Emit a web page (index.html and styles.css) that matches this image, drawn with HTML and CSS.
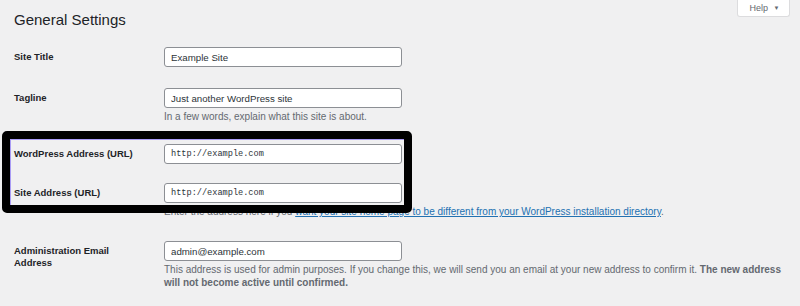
FILE: index.html
```html
<!DOCTYPE html>
<html lang="en">
<head>
  <meta charset="UTF-8" />
  <title>General Settings</title>
  <link rel="stylesheet" href="styles.css">
</head>
<body>
  <div class="wrap">
    <div class="page-head">
      <h1>General Settings</h1>
      <button class="help-tab">Help <span class="caret">&#9660;</span></button>
    </div>

    <div class="form-table">
      <div class="row">
        <label class="row-label">Site Title</label>
        <div class="row-field">
          <input class="regular-text" type="text" value="Example Site">
        </div>
      </div>

      <div class="row">
        <label class="row-label">Tagline</label>
        <div class="row-field">
          <input class="regular-text" type="text" value="Just another WordPress site">
          <p class="description">In a few words, explain what this site is about.</p>
        </div>
      </div>

      <div class="row">
        <label class="row-label">WordPress Address (URL)</label>
        <div class="row-field">
          <input class="regular-text code" type="text" value="http://example.com">
        </div>
      </div>

      <div class="row row-tight">
        <label class="row-label">Site Address (URL)</label>
        <div class="row-field">
          <input class="regular-text code" type="text" value="http://example.com">
          <p class="description">Enter the address here if you <a href="#">want your site home page to be different from your WordPress installation directory</a>.</p>
        </div>
      </div>

      <div class="row">
        <label class="row-label label-wrap">Administration Email<br>Address</label>
        <div class="row-field">
          <input class="regular-text" type="text" value="admin@example.com">
          <p class="description">This address is used for admin purposes. If you change this, we will send you an email at your new address to confirm it. <strong>The new address will not become active until confirmed.</strong></p>
        </div>
      </div>
    </div>

    <!-- highlight drawn over the two URL rows -->
    <div class="highlight"></div>
  </div>
</body>
</html>
```

FILE: styles.css
```css
:root {
  --bg-color: #f0f0f1;
  --text-color: #1d2327;
  --muted-color: #646970;
  --link-color: #2271b1;
  --border-color: #8c8f94;
}

* {
  margin: 0;
  padding: 0;
  box-sizing: border-box;
}

body {
  background-color: var(--bg-color);
  color: var(--text-color);
  font-family: 'Liberation Sans', Arial, sans-serif;
  overflow: hidden;
}

.wrap {
  position: relative;
  width: 800px;
  height: 306px;
  padding: 0 10px 0 14px;
}

.page-head {
  display: flex;
  justify-content: space-between;
  align-items: flex-start;
  height: 36px;
}

.page-head h1 {
  font-size: 15px;
  font-weight: 400;
  line-height: 20px;
  padding-top: 10px;
  color: var(--text-color);
}

.help-tab {
  width: 53px;
  height: 18px;
  margin-top: -1px;
  background: #fff;
  border: 1px solid #dcdcde;
  border-top: none;
  border-radius: 0 0 3px 3px;
  color: var(--muted-color);
  font-family: inherit;
  font-size: 9px;
  padding-left: 2px;
}

.help-tab .caret {
  font-size: 6px;
  margin-left: 3px;
  vertical-align: 1px;
}

.row {
  display: flex;
  padding: 11px 0 10px;
}

.row-tight {
  padding-top: 9px;
  padding-bottom: 12px;
}

.row-label {
  width: 150px;
  flex-shrink: 0;
  font-size: 9.5px;
  font-weight: 700;
  line-height: 20px;
}

.row-label.label-wrap {
  line-height: 12px;
  padding-top: 4px;
}

.row-field {
  flex: 1;
}

.regular-text {
  display: block;
  width: 238px;
  height: 20px;
  padding: 0 6px;
  background: #fff;
  border: 1px solid var(--border-color);
  border-radius: 3px;
  color: #2c3338;
  font-family: inherit;
  font-size: 9.7px;
}

.regular-text.code {
  font-family: 'Liberation Mono', 'Courier New', monospace;
  font-size: 8.6px;
}

.description {
  max-width: 622px;
  margin-top: 2px;
  font-size: 10px;
  line-height: 13px;
  color: var(--muted-color);
}

.description a {
  color: var(--link-color);
}

.highlight {
  position: absolute;
  left: 2px;
  top: 131px;
  width: 410px;
  height: 82px;
  border: 8px solid #000;
  border-radius: 5px;
  box-shadow: inset 1px 1px 0 #a99cf5;
}
```
